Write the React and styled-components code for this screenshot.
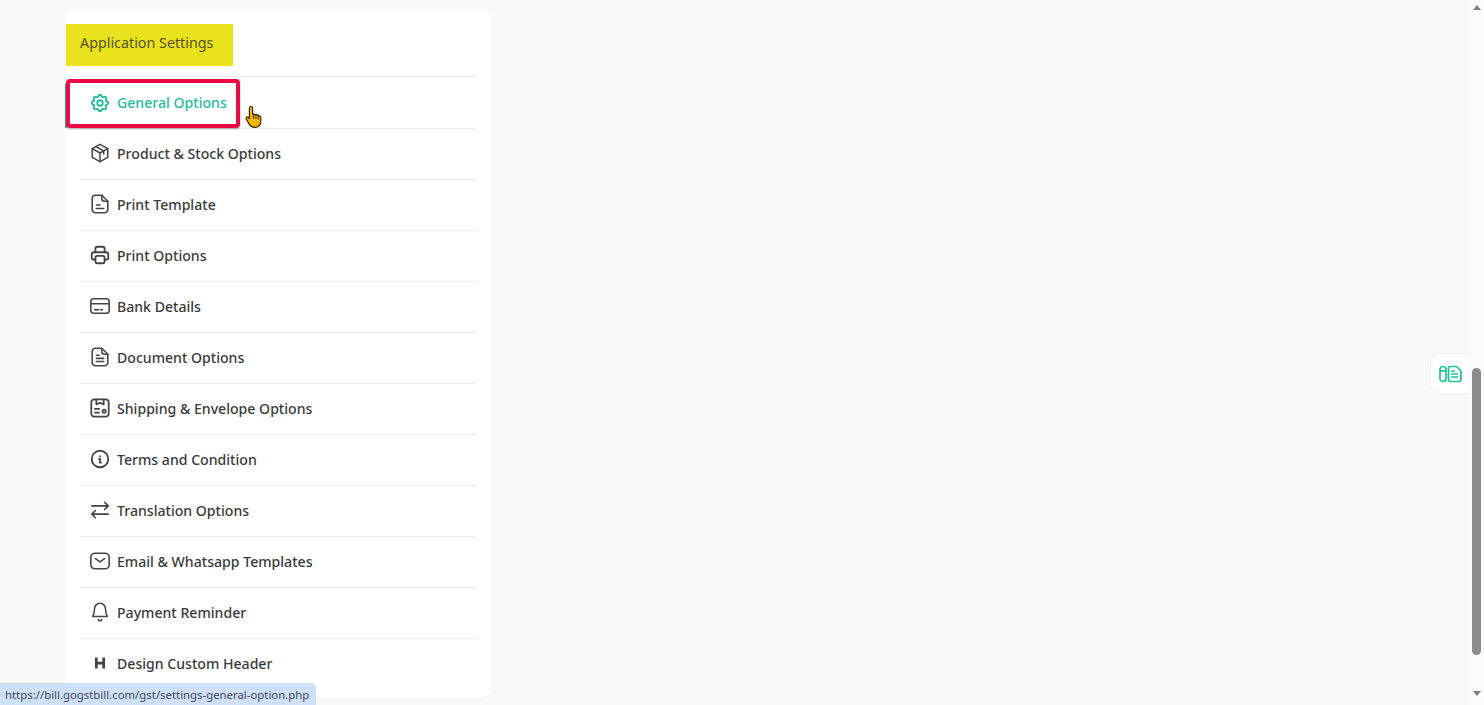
import React from 'react';
import styled, { createGlobalStyle } from 'styled-components';
import { TbSettings, TbPrinter, TbInfoCircle } from 'react-icons/tb';

const GlobalStyle = createGlobalStyle`
    html, body {
        margin: 0;
        padding: 0;
        height: 100%;
        overflow: hidden;
        background: #f8f8f8;
        font-family: "Noto Sans", "Open Sans", sans-serif;
    }
`

const Page = styled.div`
    position: relative;
    display: flex;
    width: 1484px;
    height: 705px;
    overflow: hidden;
`
const Main = styled.main`
    flex: 1;
    padding: 9px 0 0 65px;
`
const Card = styled.section`
    position: relative;
    box-sizing: border-box;
    width: 426px;
    height: 688px;
    padding: 15px 15px 0;
    background: #ffffff;
    border-radius: 8px;
`
const Title = styled.h2`
    display: inline-flex;
    align-items: center;
    box-sizing: border-box;
    width: 167px;
    height: 42px;
    margin: 0 0 10px -14px;
    padding: 0 0 5px 14px;
    background: #e9e21c;
    color: #555027;
    font-size: 14.3px;
    font-weight: 400;
`
const Menu = styled.ul`
    list-style: none;
    margin: 0;
    padding: 0;
`
const Row = styled.li`
    display: flex;
    align-items: center;
    gap: 6px;
    box-sizing: border-box;
    height: ${({ $active }) => ($active ? '52px' : '51px')};
    padding: 0 0 ${({ $active }) => ($active ? '0' : '2px')} 9px;
    border-top: 1px solid #ebebeb;
    color: ${({ $active }) => ($active ? '#1fbb9d' : '#3a3a3a')};
    font-size: 14.1px;
    font-weight: 500;

    svg {
        flex: none;
        width: 22px;
        height: 22px;
        color: ${({ $active }) => ($active ? '#1fbb9d' : '#444444')};
    }
`
const ActiveBar = styled.span`
    position: absolute;
    left: 0;
    top: 75px;
    width: 2px;
    height: 44px;
    background: #1fbb9d;
`
const Highlight = styled.span`
    position: absolute;
    left: 1px;
    top: 70px;
    box-sizing: border-box;
    width: 174px;
    height: 49px;
    border: 4px solid #ea0b45;
    border-radius: 4px;
    box-shadow: 0 1px 2px rgba(0, 0, 0, 0.35);
`
const Cursor = styled.svg`
    position: absolute;
    left: 245px;
    top: 105px;
`
const FloatTab = styled.button`
    position: absolute;
    right: 15px;
    top: 353px;
    display: flex;
    align-items: center;
    justify-content: center;
    box-sizing: border-box;
    width: 39px;
    height: 42px;
    padding: 0 0 0 2px;
    background: #ffffff;
    border: 1px solid #f0f0f0;
    border-right: 0;
    border-radius: 12px 0 0 12px;
`
const StatusBubble = styled.div`
    position: absolute;
    left: 0;
    bottom: 0;
    box-sizing: border-box;
    width: 316px;
    height: 22px;
    padding-left: 5px;
    background: #cfe0fb;
    border-top-right-radius: 5px;
    color: #444a55;
    font-size: 11.36px;
    line-height: 23px;
    white-space: nowrap;
`
const Scrollbar = styled.aside`
    display: flex;
    flex-direction: column;
    align-items: center;
    flex: none;
    width: 15px;
    height: 100%;
    background: #fbfbfb;
`
const Arrow = styled.span`
    flex: none;
    width: 0;
    height: 0;
    margin-top: ${({ $up }) => ($up ? '5px' : '36px')};
    border-left: 4px solid transparent;
    border-right: 4px solid transparent;
    ${({ $up }) => ($up ? 'border-bottom' : 'border-top')}: 5px solid #7f7f7f;
`
const Thumb = styled.span`
    flex: none;
    width: 9px;
    height: 287px;
    margin-top: 358px;
    background: #8c8c8c;
    border-radius: 5px;
`

const Line = (props) => (
    <svg viewBox="0 0 24 24" fill="none" stroke="currentColor" strokeWidth="1.700" strokeLinecap="round" strokeLinejoin="round" {...props} />
);

const BoxIcon = () => (
    <Line strokeWidth="1.600">
        <path d="M12 2.500l8.500 4.800v9.400L12 21.500l-8.500-4.800V7.300z" />
        <path d="M3.500 7.300 12 12l8.500-4.700M12 12v9.500" />
        <path d="M7.500 5 16 9.800V13" />
    </Line>
);

const TemplateIcon = () => (
    <Line>
        <path d="M14 2.500H7a3.500 3.500 0 0 0-3.500 3.500v12A3.500 3.500 0 0 0 7 21.500h10a3.500 3.500 0 0 0 3.500-3.500V9z" />
        <path d="M14 2.500V6a3 3 0 0 0 3 3h3.500" />
        <path d="M8 13h4M8 17h8" />
    </Line>
);

const CardIcon = () => (
    <Line>
        <rect x="2" y="4" width="20" height="16" rx="3" />
        <path d="M2 9.500h20M6 16h4.500M12.500 16h2" />
    </Line>
);

const DocumentIcon = () => (
    <Line>
        <path d="M14 2.500H7a3.500 3.500 0 0 0-3.500 3.500v12A3.500 3.500 0 0 0 7 21.500h10a3.500 3.500 0 0 0 3.500-3.500V9z" />
        <path d="M14 2.500V6a3 3 0 0 0 3 3h3.500" />
        <path d="M8 10h3M8 13.500h8M8 17h8" />
    </Line>
);

const ShippingIcon = () => (
    <Line strokeWidth="1.900">
        <rect x="2.500" y="2.500" width="19" height="19" rx="3.500" />
        <path d="M8 2.500V8l4-1.800L16 8V2.500" />
        <path d="M6.500 13h4.500M6.500 17h4.500" />
        <circle cx="16.500" cy="15.500" r="1.800" />
    </Line>
);

const SwapIcon = () => (
    <Line>
        <path d="M3 7.500h18M17 3.500l4 4-4 4" />
        <path d="M21 16.500H3M7 12.500l-4 4 4 4" />
    </Line>
);

const MailIcon = () => (
    <Line>
        <rect x="2" y="3.500" width="20" height="17" rx="4.500" />
        <path d="m7 9.500 5 3.500 5-3.500" />
    </Line>
);

const BellIcon = () => (
    <Line>
        <path d="M12 2.500a6 6 0 0 1 6 6c0 4.500 1 6.500 2 8.500H4c1-2 2-4 2-8.500a6 6 0 0 1 6-6z" />
        <path d="M10 20.300a2.200 2.200 0 0 0 4 0" />
    </Line>
);

const HeaderIcon = () => (
    <Line strokeWidth="3" strokeLinecap="butt">
        <path d="M8 6v12M16 6v12M8 12h8" />
    </Line>
);

const HandCursor = () => (
    <Cursor width="20" height="24" viewBox="0 0 20 24">
        <path
            d="M6 1.500c1 0 1.600.7 1.600 1.700v6.300l1.100-.4c.8-.2 1.400 0 1.700.6.7-.4 1.500-.2 1.900.5.8-.3 1.500 0 1.800.7.900-.2 1.700.4 1.700 1.400v3.800c0 3.400-2 6-5.300 6.300-3 .2-4.800-.7-6.200-3L1.300 14.200c-.5-.9-.3-1.600.4-2 .7-.4 1.400-.2 2 .5l.7.9V3.200C4.400 2.200 5 1.500 6 1.500z"
            fill="#f7b500"
            stroke="#3a2a00"
            strokeWidth="1.200"
            strokeLinejoin="round"
        />
        <path d="M8.600 10v4M11 10v4M13.400 11v3.500" stroke="#3a2a00" strokeWidth="1" fill="none" />
    </Cursor>
);

const TabIcon = () => (
    <svg width="24" height="20" viewBox="0 0 24 20" fill="none" stroke="#1fc29c" strokeWidth="1.700" strokeLinejoin="round">
        <rect x="1" y="2.500" width="6" height="15" rx="3" />
        <path d="M1 7h6" />
        <path d="M9.500 4.500c0-1.200 1-2 2-2h6l4.500 4.500v8c0 1.500-1 2.500-2.500 2.500h-7.500c-1.500 0-2.500-1-2.500-2.500z" />
        <path d="M12 7h4M12 10h7M12 13h7" />
    </svg>
);

const items = [
    { label: 'General Options', icon: <TbSettings />, active: true },
    { label: 'Product & Stock Options', icon: <BoxIcon /> },
    { label: 'Print Template', icon: <TemplateIcon /> },
    { label: 'Print Options', icon: <TbPrinter /> },
    { label: 'Bank Details', icon: <CardIcon /> },
    { label: 'Document Options', icon: <DocumentIcon /> },
    { label: 'Shipping & Envelope Options', icon: <ShippingIcon /> },
    { label: 'Terms and Condition', icon: <TbInfoCircle /> },
    { label: 'Translation Options', icon: <SwapIcon /> },
    { label: 'Email & Whatsapp Templates', icon: <MailIcon /> },
    { label: 'Payment Reminder', icon: <BellIcon /> },
    { label: 'Design Custom Header', icon: <HeaderIcon /> },
];

const App = () => {
    return (
        <>
            <GlobalStyle />
            <Page>
                <Main>
                    <Card>
                        <Title>Application Settings</Title>
                        <Menu>
                            {items.map((item) => (
                                <Row key={item.label} $active={item.active}>
                                    {item.icon}
                                    <span>{item.label}</span>
                                </Row>
                            ))}
                        </Menu>
                        <ActiveBar />
                        <Highlight />
                    </Card>
                </Main>
                <Scrollbar>
                    <Arrow $up />
                    <Thumb />
                    <Arrow />
                </Scrollbar>
                <HandCursor />
                <FloatTab aria-label="Notes"><TabIcon /></FloatTab>
                <StatusBubble>https://bill.gogstbill.com/gst/settings-general-option.php</StatusBubble>
            </Page>
        </>
    );
}

export default App;
